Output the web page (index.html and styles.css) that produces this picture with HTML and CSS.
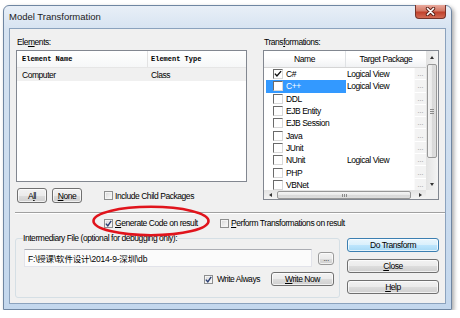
FILE: index.html
```html
<!doctype html>
<html lang="en">
    <head>
        <meta charset="UTF-8" />
        <title>Model Transformation</title>
        <link rel="stylesheet" href="styles.css">
    </head>
    <body>
        <div class="window">
            <div class="titlebar">
                <span class="title">Model Transformation</span>
                <button class="close-btn" aria-label="Close">
                    <svg width="13" height="9" viewBox="0 0 13 9">
                        <path d="M3.5 1.5 L9.5 7.5 M9.5 1.5 L3.5 7.5" stroke="#5a2119" stroke-width="3.4" stroke-linecap="round" />
                        <path d="M3.5 1.5 L9.5 7.5 M9.5 1.5 L3.5 7.5" stroke="#fff" stroke-width="1.7" stroke-linecap="round" />
                    </svg>
                </button>
            </div>

            <div class="client">
                <div class="top">
                    <!-- Elements list -->
                    <div class="pane elements">
                        <div class="caption">Ele<u>m</u>ents:</div>
                        <div class="list">
                            <div class="list-head">
                                <span class="col-name">Element Name</span>
                                <span class="col-type">Element Type</span>
                            </div>
                            <div class="list-row selected">
                                <span class="col-name">Computer</span>
                                <span class="col-type">Class</span>
                            </div>
                        </div>
                        <div class="list-actions">
                            <button class="btn btn-sm">A<u>l</u>l</button>
                            <button class="btn btn-sm"><u>N</u>one</button>
                            <label class="check child-packages"><span class="box"></span>Include Child Packages</label>
                        </div>
                    </div>

                    <!-- Transformations grid -->
                    <div class="pane transformations">
                        <div class="caption">Trans<u>f</u>ormations:</div>
                        <div class="grid">
                            <div class="grid-view">
                                <div class="grid-head">
                                    <span class="gh-name">Name</span>
                                    <span class="gh-target">Target Package</span>
                                </div>
                                <div class="grid-body">
                                    <div class="grow">
                                        <span class="cell-name"><span class="gbox"><svg width="9" height="8" viewBox="0 0 9 8"><path d="M1 3.6 L3.3 6.2 L8 0.8" fill="none" stroke="#111" stroke-width="1.6" /></svg></span>C#</span>
                                        <span class="cell-target">Logical View</span>
                                        <span class="cell-more">...</span>
                                    </div>
                                    <div class="grow">
                                        <span class="cell-name selected"><span class="gbox"></span>C++</span>
                                        <span class="cell-target">Logical View</span>
                                        <span class="cell-more">...</span>
                                    </div>
                                    <div class="grow">
                                        <span class="cell-name"><span class="gbox"></span>DDL</span>
                                        <span class="cell-target"></span>
                                        <span class="cell-more">...</span>
                                    </div>
                                    <div class="grow">
                                        <span class="cell-name"><span class="gbox"></span>EJB Entity</span>
                                        <span class="cell-target"></span>
                                        <span class="cell-more">...</span>
                                    </div>
                                    <div class="grow">
                                        <span class="cell-name"><span class="gbox"></span>EJB Session</span>
                                        <span class="cell-target"></span>
                                        <span class="cell-more">...</span>
                                    </div>
                                    <div class="grow">
                                        <span class="cell-name"><span class="gbox"></span>Java</span>
                                        <span class="cell-target"></span>
                                        <span class="cell-more">...</span>
                                    </div>
                                    <div class="grow">
                                        <span class="cell-name"><span class="gbox"></span>JUnit</span>
                                        <span class="cell-target"></span>
                                        <span class="cell-more">...</span>
                                    </div>
                                    <div class="grow">
                                        <span class="cell-name"><span class="gbox"></span>NUnit</span>
                                        <span class="cell-target">Logical View</span>
                                        <span class="cell-more">...</span>
                                    </div>
                                    <div class="grow">
                                        <span class="cell-name"><span class="gbox"></span>PHP</span>
                                        <span class="cell-target"></span>
                                        <span class="cell-more">...</span>
                                    </div>
                                    <div class="grow">
                                        <span class="cell-name"><span class="gbox"></span>VBNet</span>
                                        <span class="cell-target"></span>
                                        <span class="cell-more">...</span>
                                    </div>
                                    <div class="grow">
                                        <span class="cell-name"><span class="gbox"></span></span>
                                        <span class="cell-target"></span>
                                        <span class="cell-more"></span>
                                    </div>
                                </div>
                            </div>
                            <div class="vscroll">
                                <span class="arrow"><span class="tri up"></span></span>
                                <span class="thumb"></span>
                                <span class="arrow end"><span class="tri down"></span></span>
                            </div>
                            <div class="hscroll">
                                <span class="arrow"><span class="tri left"></span></span>
                                <span class="thumb"></span>
                                <span class="arrow end"><span class="tri right"></span></span>
                            </div>
                            <div class="corner"></div>
                        </div>
                    </div>
                </div>

                <div class="separator"></div>

                <div class="options">
                    <label class="check gen-code"><span class="box"><svg width="7" height="7" viewBox="0 0 7 7"><path d="M0.8 3.6 L2.8 5.8 L6.2 0.8" fill="none" stroke="#2b3f73" stroke-width="1.4" /></svg></span><span><u>G</u>enerate Code on result</span></label>
                    <label class="check"><span class="box"></span><span><u>P</u>erform Transformations on result</span></label>
                </div>

                <div class="bottom">
                    <!-- Intermediary file group -->
                    <div class="group">
                        <div class="group-title">Intermediary File (optional for debugging only):</div>
                        <div class="file-row">
                            <div class="path">F:\授课\软件设计\2014-9-深圳\db</div>
                            <button class="btn btn-dots">...</button>
                        </div>
                        <div class="write-row">
                            <label class="check"><span class="box"><svg width="7" height="7" viewBox="0 0 7 7"><path d="M0.8 3.6 L2.8 5.8 L6.2 0.8" fill="none" stroke="#2b3f73" stroke-width="1.4" /></svg></span>Write Always</label>
                            <button class="btn btn-write"><u>W</u>rite Now</button>
                        </div>
                    </div>

                    <div class="actions">
                        <button class="btn btn-default">Do Transform</button>
                        <button class="btn"><u>C</u>lose</button>
                        <button class="btn"><u>H</u>elp</button>
                    </div>
                </div>
            </div>

            <!-- red highlight drawn over the dialog -->
            <svg class="mark" width="120" height="34" viewBox="0 0 120 34">
                <ellipse cx="60" cy="17" rx="57.5" ry="14.2" fill="none" stroke="#e0141c" stroke-width="2.6" />
            </svg>
        </div>
    </body>
</html>
```

FILE: styles.css
```css
/* Basic styling */
* {
    box-sizing: border-box;
}
body {
    margin: 0;
    background-color: #fff;
    font-family: "Liberation Sans", Arial, "Noto Sans CJK SC", sans-serif;
    font-size: 8.5px;
    letter-spacing: -0.45px;
    color: #000;
}
u {
    text-decoration: underline;
}

/* Window frame */
.window {
    position: relative;
    width: 449px;
    height: 305px;
    margin: 5px 0 0 3px;
    padding: 0 5px 5px;
    border: 1px solid #6f86a2;
    border-radius: 6px 6px 0 0;
    background: linear-gradient(#e8eff7, #d6e3f1 24px, #c3d7ed);
    box-shadow: 2px 2px 4px rgba(0, 0, 0, 0.35);
}
.titlebar {
    height: 22px;
    display: flex;
    justify-content: space-between;
    align-items: flex-start;
}
.title {
    margin-top: 5px;
    font-size: 9.5px;
    letter-spacing: 0;
    color: #1b1b1b;
}
.close-btn {
    width: 31px;
    height: 14px;
    margin-top: -1px;
    padding: 0;
    display: flex;
    align-items: center;
    justify-content: center;
    border: 1px solid #74332a;
    border-top: none;
    border-radius: 0 0 4px 4px;
    background: linear-gradient(#e9a99d, #d47a67 45%, #c0412c 55%, #d26b55);
}
.client {
    height: 276px;
    display: flex;
    flex-direction: column;
    padding: 8px 6px 0;
    background-color: #f0f0f0;
    border: 1px solid #8ba2bd;
}

/* Top panes */
.top {
    display: flex;
    gap: 16px;
    height: 166px;
}
.elements {
    width: 231px;
}
.transformations {
    width: 176px;
}
.caption {
    height: 13px;
    line-height: 11px;
    padding-left: 1px;
}
.list {
    height: 132px;
    background-color: #fff;
    border: 1px solid #828790;
}
.list-head {
    display: flex;
    height: 17px;
    border-bottom: 1px solid #e6e6e6;
    background: linear-gradient(#fff, #f6f7f8);
    font-family: "Liberation Mono", monospace;
    font-size: 7px;
    font-weight: bold;
    letter-spacing: 0;
}
.list-row {
    display: flex;
    height: 13px;
}
.list-row.selected {
    background-color: #f0f0f0;
}
.col-name {
    width: 131px;
    display: flex;
    align-items: center;
    padding-left: 5px;
}
.list-head .col-name {
    border-right: 1px solid #e3e3e3;
}
.col-type {
    display: flex;
    align-items: center;
    padding-left: 3px;
}
.list-actions {
    display: flex;
    align-items: center;
    gap: 5px;
    height: 15px;
    margin-top: 6px;
    padding-left: 1px;
}
.child-packages {
    margin-left: 17px;
}

/* Buttons */
.btn {
    height: 14px;
    padding: 0;
    font: inherit;
    letter-spacing: inherit;
    color: #000;
    border: 1px solid #707070;
    border-radius: 3px;
    background: linear-gradient(#f2f2f2, #ebebeb 50%, #dddddd 51%, #cfcfcf);
    box-shadow: inset 0 0 0 1px rgba(255, 255, 255, 0.7);
}
.btn-sm {
    width: 30px;
    height: 15px;
}
.btn-default {
    border-color: #3c7fb1;
    background: linear-gradient(#eaf6fd, #d9f0fc 50%, #bee6fd 51%, #a7d9f5);
}
.btn-dots {
    width: 16px;
    height: 13px;
    color: #555;
    border-color: #9a9a9a;
}
.btn-write {
    width: 63px;
}

/* Checkboxes */
.check {
    display: flex;
    align-items: center;
    gap: 2px;
}
.box {
    width: 9px;
    height: 9px;
    display: flex;
    align-items: center;
    justify-content: center;
    border: 1px solid #8e8f8f;
    background: linear-gradient(135deg, #d6d6d6, #fdfdfd);
    box-shadow: inset 0 0 0 1px #f4f4f4;
}

/* Transformations grid */
.grid {
    display: grid;
    grid-template-columns: 162px 12px;
    grid-template-rows: 139px 9px;
    height: 150px;
    background-color: #fff;
    border: 1px solid #828790;
}
.grid-view {
    overflow: hidden;
}
.grid-head {
    display: flex;
    height: 17px;
    line-height: 16px;
    text-align: center;
    border-bottom: 1px solid #d5d5d5;
    background: linear-gradient(#fff 40%, #f1f2f4);
}
.gh-name {
    width: 82px;
    border-right: 1px solid #e0e2e5;
}
.gh-target {
    width: 80px;
}
.grow {
    display: flex;
    height: 12.3px;
    align-items: stretch;
}
.cell-name {
    width: 80px;
    margin-left: 2px;
    display: flex;
    align-items: center;
    gap: 3px;
    padding-left: 7px;
}
.cell-name.selected {
    background-color: #3399ff;
    color: #fff;
}
.gbox {
    width: 10px;
    height: 10px;
    display: flex;
    align-items: center;
    justify-content: center;
    background-color: #fff;
    border: 1px solid;
    border-color: #6a6a6a #d8d8d8 #d8d8d8 #6a6a6a;
}
.cell-target {
    width: 68px;
    display: flex;
    align-items: center;
    padding-left: 1px;
}
.cell-more {
    width: 12px;
    display: flex;
    align-items: center;
    justify-content: center;
    color: #8a8a8a;
    font-size: 7px;
    letter-spacing: 0;
    background-color: #f3f3f3;
    border-bottom: 1px solid #fff;
    border-left: 1px solid #fafafa;
}

/* Scrollbars */
.vscroll {
    display: flex;
    flex-direction: column;
    background: linear-gradient(90deg, #e3e3e3, #f4f4f4);
}
.hscroll {
    display: flex;
    background: linear-gradient(#e3e3e3, #f4f4f4);
}
.corner {
    background-color: #f0f0f0;
}
.arrow {
    display: flex;
    align-items: center;
    justify-content: center;
    flex: 0 0 12px;
}
.vscroll .arrow.end {
    margin-top: auto;
}
.hscroll .arrow.end {
    margin-left: auto;
}
.tri {
    width: 0;
    height: 0;
    border: 2px solid transparent;
}
.tri.up {
    border-bottom: 3px solid #333;
    border-top: none;
}
.tri.down {
    border-top: 3px solid #333;
    border-bottom: none;
}
.tri.left {
    border-right: 3px solid #333;
    border-left: none;
}
.tri.right {
    border-left: 3px solid #333;
    border-right: none;
}
.vscroll .thumb {
    height: 94px;
    margin: 1px 1px 0;
    border: 1px solid #979797;
    border-radius: 2px;
    background:
        repeating-linear-gradient(#8a8a8a 0 1px, transparent 1px 2px) center / 4px 5px no-repeat,
        linear-gradient(90deg, #f4f4f4, #e9e9e9 50%, #d8d8d8 51%, #dedede);
}
.hscroll .thumb {
    width: 134px;
    margin: 1px 0 0 1px;
    border: 1px solid #979797;
    border-radius: 2px;
    background:
        repeating-linear-gradient(90deg, #8a8a8a 0 1px, transparent 1px 2px) center / 5px 3px no-repeat,
        linear-gradient(#f4f4f4, #e9e9e9 50%, #d8d8d8 51%, #dedede);
}

/* Separator and options */
.separator {
    height: 2px;
    margin: 9px -6px 0 -1px;
    border-top: 1px solid #a0a0a0;
    border-bottom: 1px solid #fff;
}
.options {
    display: flex;
    align-items: center;
    height: 18px;
    padding-left: 88px;
}
.gen-code {
    width: 116px;
}

/* Bottom area */
.bottom {
    display: flex;
    gap: 7px;
    margin-top: 1px;
}
.group {
    width: 325px;
    height: 60px;
    margin: 5px 0 0 -1px;
    padding: 0 5px 0 7px;
    border: 1px solid #d5dfe5;
    border-radius: 3px;
}
.group-title {
    width: fit-content;
    margin-top: -6px;
    line-height: 11px;
    background-color: #f0f0f0;
}
.file-row {
    display: flex;
    align-items: center;
    gap: 6px;
    margin-top: 5px;
    padding-left: 1px;
}
.path {
    width: 288px;
    height: 18px;
    display: flex;
    align-items: center;
    padding-left: 3px;
    letter-spacing: -0.2px;
    background-color: #fbfbfb;
    border: 1px solid #e2e3ea;
    border-top-color: #abadb3;
}
.write-row {
    display: flex;
    align-items: center;
    justify-content: flex-end;
    gap: 11px;
    margin-top: 5px;
}
.write-row .check {
    gap: 4px;
}
.actions {
    width: 92px;
    display: flex;
    flex-direction: column;
    gap: 7px;
    margin-top: 5px;
}

/* Red marker */
.mark {
    position: absolute;
    left: 87px;
    top: 198px;
}
```
